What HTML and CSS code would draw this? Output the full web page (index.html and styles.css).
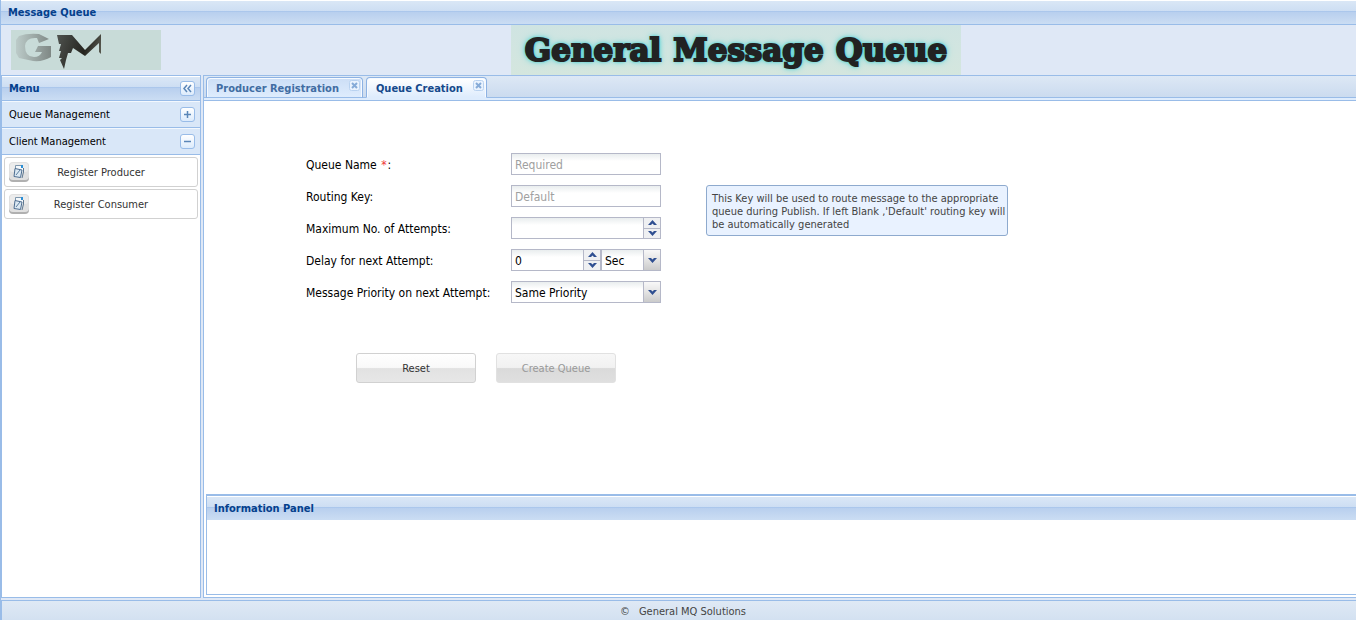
FILE: index.html
```html
<!DOCTYPE html>
<html lang="en">
<head>
<meta charset="utf-8">
<title>Message Queue</title>
<link rel="stylesheet" href="styles.css">
</head>
<body>
<svg class="defs" aria-hidden="true">
  <symbol id="up" viewBox="0 0 9 5"><path d="M0 5L4.500 0L9 5H6L4.500 3.500L3 5Z" fill="#2f4f91"/></symbol>
  <symbol id="down" viewBox="0 0 9 5"><path d="M0 0H3L4.500 1.500L6 0H9L4.500 5Z" fill="#2f4f91"/></symbol>
  <symbol id="close" viewBox="0 0 11 11"><rect x=".5" y=".5" width="10" height="10" rx="2" fill="#eaf3fe" stroke="#b9d2f0"/><path d="M3 3L8 8M8 3L3 8" stroke="#86abd8" stroke-width="2"/></symbol>
  <symbol id="note" viewBox="0 0 20 20">
    <rect x="0" y="1" width="20" height="19" rx="4" fill="#b0b0b0"/>
    <rect x="0" y="0" width="20" height="18" rx="4" fill="#e0e0e0"/>
    <rect x="1" y="1" width="18" height="9" rx="3" fill="#ececec"/>
    <path d="M7 3H13L14 7L12 16L5 15L6 7Z" fill="#f4f8fb"/>
    <path d="M6.500 7V3.500H12" fill="none" stroke="#7f97ad"/>
    <path d="M6 6.500L13 8L11.500 15.500L5 14.500Z" fill="#dbe8f2" stroke="#4d6d90"/>
    <path d="M7 13L11 8" fill="none" stroke="#5d7f9f"/>
    <path d="M14.500 6V10L13 16" fill="none" stroke="#5f7890"/>
    <rect x="12" y="3" width="2" height="3" fill="#2b8fd6"/>
  </symbol>
</svg>
<div class="app">
  <h1 class="bar title">Message Queue</h1>
  <header class="header">
    <svg class="logo" viewBox="0 0 150 40" role="img" aria-label="GM">
      <defs>
        <linearGradient id="g"><stop offset="0" stop-color="#bccbc9"/><stop offset="1" stop-color="#7f8885"/></linearGradient>
        <linearGradient id="m" x2="1" y2=".3"><stop offset="0" stop-color="#505450"/><stop offset=".7" stop-color="#25241f"/><stop offset="1" stop-color="#55564d"/></linearGradient>
      </defs>
      <rect width="150" height="40" fill="#c8dbd8"/>
      <path d="M8 6Q16 3 28 4L38 9L28 13L26 8Q15 7 14 16Q14 27 23 27Q29 27 31 22H24L27 16H40V27Q32 32 22 31L8 28L5 23V10Z" fill="url(#g)"/>
      <path d="M46 5H61L74 20L90 4V24L88 22V13L74 26L62 18L60 23H57L55 30L53 39L49 30L51 28H48L50 21H48L50 14H48Z" fill="url(#m)"/>
    </svg>
    <div class="banner"><span>General</span><span>Message</span><span>Queue</span></div>
  </header>
  <div class="center">
    <nav class="side">
      <div class="bar side-head"><h2>Menu</h2>
        <button class="tool" aria-label="Collapse menu"><svg viewBox="0 0 15 15"><path d="M7 4L4 7.500L7 11M11 4L8 7.500L11 11"/></svg></button></div>
      <div class="group"><span>Queue Management</span>
        <button class="tool" aria-label="Expand Queue Management"><svg viewBox="0 0 15 15"><path d="M4 7.500H11M7.500 4V11"/></svg></button></div>
      <div class="group"><span>Client Management</span>
        <button class="tool" aria-label="Collapse Client Management"><svg viewBox="0 0 15 15"><path d="M4 7.500H11"/></svg></button></div>
      <div class="items">
        <button class="item"><svg><use href="#note"/></svg><span>Register Producer</span></button>
        <button class="item"><svg><use href="#note"/></svg><span>Register Consumer</span></button>
      </div>
    </nav>
    <main class="main">
      <div class="tabs">
        <div class="tab"><button class="tab-label">Producer Registration</button><button class="close" aria-label="Close Producer Registration"><svg><use href="#close"/></svg></button></div>
        <div class="tab active"><button class="tab-label">Queue Creation</button><button class="close" aria-label="Close Queue Creation"><svg><use href="#close"/></svg></button></div>
      </div>
      <form class="form">
        <div class="row">
          <div class="fields">
            <label for="name">Queue Name <span class="star">*</span>:</label>
            <input class="box" id="name" type="text" placeholder="Required">
            <label for="key">Routing Key:</label>
            <input class="box" id="key" type="text" placeholder="Default">
            <label for="max">Maximum No. of Attempts:</label>
            <div class="box combo"><input id="max" type="number">
              <div class="spin"><button type="button" aria-label="Increase attempts"><svg><use href="#up"/></svg></button><button type="button" aria-label="Decrease attempts"><svg><use href="#down"/></svg></button></div></div>
            <label for="delay">Delay for next Attempt:</label>
            <div class="pair">
              <div class="box combo"><input id="delay" type="number" value="0">
                <div class="spin"><button type="button" aria-label="Increase delay"><svg><use href="#up"/></svg></button><button type="button" aria-label="Decrease delay"><svg><use href="#down"/></svg></button></div></div>
              <div class="box combo"><select aria-label="Delay unit"><option>Sec</option></select><span class="drop"><svg><use href="#down"/></svg></span></div>
            </div>
            <label for="prio">Message Priority on next Attempt:</label>
            <div class="box combo"><select id="prio"><option>Same Priority</option></select><span class="drop"><svg><use href="#down"/></svg></span></div>
          </div>
          <p class="hint">This Key will be used to route message to the appropriate queue during Publish. If left Blank ,'Default' routing key will be automatically generated</p>
        </div>
        <div class="actions"><button class="btn" type="reset">Reset</button><button class="btn" type="submit" disabled>Create Queue</button></div>
      </form>
      <section class="info">
        <h2 class="bar">Information Panel</h2>
      </section>
    </main>
  </div>
  <footer class="footer"><span>©</span><span>General MQ Solutions</span></footer>
</div>
</body>
</html>
```
FILE: styles.css
```css
* { box-sizing: border-box; }
body { margin: 0; color: #000; font: 12px/16px Tahoma, "DejaVu Sans Condensed", sans-serif; }
h1, h2, p { margin: 0; }
button, input, select { margin: 0; padding: 0; border: 0; background: none; color: inherit; font: inherit; }
svg { display: block; }
.defs { display: none; }

.app { display: flex; flex-direction: column; height: 100vh; overflow: hidden; border-left: 1px solid #99bce8; background: #dfe8f6; }
.bar { display: flex; align-items: center; flex: none; height: 24px; padding: 2px 7px 0; color: #04408c; font-size: 11px; font-weight: bold; background: linear-gradient(#fff 1px, #dae7f6 1px, #cddef3 11px, #abc7ec 11px, #abc7ec 12px, #b8cfee 12px, #cbddf3); }
.bar h2 { padding-top: 2px; font-size: 11px; }
.title { height: 25px; border-bottom: 1px solid #99bce8; }

.header { display: flex; align-items: center; flex: none; height: 50px; padding: 0 45px 0 10px; }
.logo { width: 150px; height: 40px; flex: none; }
.banner { display: flex; align-items: center; justify-content: center; gap: 12px; width: 450px; height: 50px; margin: 0 auto; background: linear-gradient(#cfe4e2, #d4e6de); color: #222; font: bold 31px/48px "DejaVu Serif", serif; -webkit-text-stroke: 2px #222; text-shadow: 0 0 3px #1fc4cc, 0 0 5px #35cfd5, 0 0 8px #6fd8da; }

.center { display: flex; gap: 2px; flex: 1; min-height: 0; }
.side { width: 200px; flex: none; border: 1px solid #99bce8; background: #fff; }
.side-head, .group { justify-content: space-between; padding: 0 5px 0 7px; border-bottom: 1px solid #99bce8; }
.side-head { height: 25px; }
.group { display: flex; align-items: center; height: 27px; border-top: 1px solid #f3f8fe; background: #d9e7f8; font-size: 11px; }
.tool { width: 15px; height: 15px; border: 1px solid #99bce8; border-radius: 3px; background: linear-gradient(#fff, #dcebfc); }
.tool svg { width: 15px; height: 15px; margin: -1px; fill: none; stroke: #5a86b8; stroke-width: 1.5; }
.items { display: flex; flex-direction: column; gap: 2px; padding: 2px; }
.item { display: flex; align-items: center; height: 30px; padding: 0 4px; border: 1px solid #d1d1d1; border-radius: 3px; background: #fff; color: #333; font-size: 11px; }
.item svg { width: 20px; height: 20px; }
.item span { flex: 1; padding: 2px 20px 0 0; }

.main { display: flex; flex-direction: column; flex: 1; min-width: 0; border: 1px solid #99bce8; border-right: 0; background: #fff; }
.tabs { display: flex; align-items: flex-end; gap: 3px; flex: none; height: 25px; padding: 1px 2px 2px; border-bottom: 1px solid #99bce8; background: linear-gradient(#dde8f5, #cbdbef 21px, #99bce8 21px, #99bce8 22px, #deecfd 22px); }
.tab { display: flex; height: 21px; padding: 0 2px 0 9px; border: 1px solid #8db2e3; border-bottom-color: #99bce8; border-radius: 4px 4px 0 0; box-shadow: inset 1px 1px #f6faff, inset -1px 0 #f6faff; background: linear-gradient(#ccdef6, #deecfd); color: #416da3; font-size: 11px; font-weight: bold; }
.tab.active { border-bottom-color: #deecfd; background: linear-gradient(#fff, #deecfd); color: #15498b; }
.tab-label { height: 20px; padding-top: 2px; }
.close { width: 11px; height: 11px; margin: 2px 0 0 10px; }
.close svg { width: 11px; height: 11px; }

.form { flex: 1; padding: 52px 0 0 102px; }
.row { display: flex; align-items: flex-start; gap: 45px; }
.fields { display: grid; grid-template-columns: 205px 150px; row-gap: 10px; align-items: center; }
.fields label { padding-top: 2px; }
.star { padding: 0 1px; color: #e33; }
.box { width: 100%; min-width: 0; height: 22px; border: 1px solid #b5b8c8; background: linear-gradient(#e9edee, #fff 7px); }
input.box { padding: 2px 3px 0; }
input::placeholder { color: #a0a0a0; opacity: 1; }
.combo { display: flex; }
.combo input, .combo select { flex: 1; min-width: 0; padding: 2px 3px 0; appearance: none; }
.combo input { appearance: textfield; }
.combo input::-webkit-inner-spin-button { display: none; }
.spin { display: flex; flex-direction: column; flex: none; width: 17px; border-left: 1px solid #b5b8c8; background: #eff0f2; }
.spin button { display: grid; place-items: center; flex: 1; }
.spin button + button { border-top: 1px solid #b5b8c8; }
.combo svg { width: 9px; height: 5px; }
.pair { display: grid; grid-template-columns: 3fr 2fr; }
.drop { display: grid; place-items: center; flex: none; width: 17px; border-left: 1px solid #b5b8c8; background: linear-gradient(#f8f8f8, #e4e4e4 50%, #cbcbcb); pointer-events: none; }
.hint { width: 302px; margin-top: 32px; padding: 6px 0 4px 5px; border: 1px solid #8eaace; border-radius: 3px; background: #e9f2ff; color: #444; font-size: 11px; line-height: 13px; }
.actions { display: flex; gap: 20px; padding: 50px 0 0 50px; }
.btn { width: 120px; height: 30px; padding-top: 2px; border: 1px solid #d1d1d1; border-radius: 3px; background: linear-gradient(#fff, #f9f9f9 48%, #e2e2e2 52%, #e7e7e7); color: #333; font-size: 11px; }
.btn:disabled { border-color: #e1e1e1; background: linear-gradient(#f7f7f7, #f1f1f1 48%, #dadada 52%, #dfdfdf); color: #999; }

.info { flex: none; height: 101px; margin: 0 0 2px 2px; border: 1px solid #99bce8; border-top-width: 2px; border-right: 0; }
.footer { display: flex; align-items: center; justify-content: center; gap: 9px; flex: none; height: 20px; margin-top: 2px; padding: 2px 0 0 8px; border: 1px solid #99bce8; border-width: 1px 0 0 1px; background: linear-gradient(#dfe9f5, #d3e1f1); color: #444; font-size: 11px; }
```
